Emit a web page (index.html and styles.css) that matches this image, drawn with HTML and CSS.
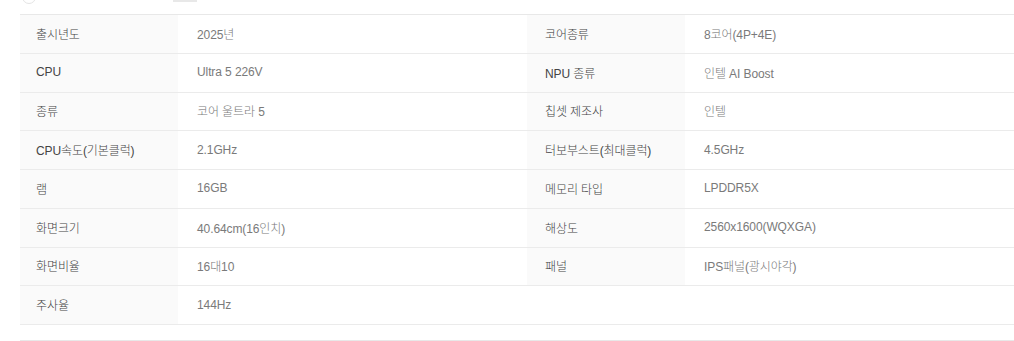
FILE: index.html
```html
<!DOCTYPE html>
<html lang="ko">
<head>
<meta charset="utf-8">
<link rel="stylesheet" href="styles.css">
</head>
<body>
<div class="page">
  <div class="top">
    <span class="dot"></span>
    <span class="tab"></span>
  </div>
  <table class="spec">
    <colgroup>
      <col class="c-label"><col class="c-value"><col class="c-label"><col class="c-value">
    </colgroup>
    <tbody>
      <tr><th>출시년도</th><td>2025년</td><th>코어종류</th><td>8코어(4P+4E)</td></tr>
      <tr><th>CPU</th><td>Ultra 5 226V</td><th>NPU 종류</th><td>인텔 AI Boost</td></tr>
      <tr><th>종류</th><td>코어 울트라 5</td><th>칩셋 제조사</th><td>인텔</td></tr>
      <tr><th>CPU속도(기본클럭)</th><td>2.1GHz</td><th>터보부스트(최대클럭)</th><td>4.5GHz</td></tr>
      <tr><th>램</th><td>16GB</td><th>메모리 타입</th><td>LPDDR5X</td></tr>
      <tr><th>화면크기</th><td>40.64cm(16인치)</td><th>해상도</th><td>2560x1600(WQXGA)</td></tr>
      <tr><th>화면비율</th><td>16대10</td><th>패널</th><td>IPS패널(광시야각)</td></tr>
      <tr><th>주사율</th><td>144Hz</td><td class="empty"></td><td class="empty"></td></tr>
    </tbody>
  </table>
  <div class="next"></div>
</div>
</body>
</html>
```
FILE: styles.css
```css
html, body {
  margin: 0;
  padding: 0;
  background: #fff;
  overflow: hidden;
}
body {
  font-family: "Liberation Sans", "Noto Sans CJK KR", sans-serif;
  font-size: 12px;
}
.page {
  width: 1034px;
  padding-left: 20px;
}
.top {
  height: 14px;
  position: relative;
}
.dot {
  position: absolute;
  left: 2px;
  top: -10px;
  width: 12px;
  height: 12px;
  border-radius: 50%;
  border: 1px solid #e4e4e4;
}
.tab {
  position: absolute;
  left: 153px;
  top: -12px;
  width: 24px;
  height: 14px;
  background: #e8e8e8;
}
.spec {
  width: 1014px;
  border-collapse: collapse;
  table-layout: fixed;
  border-top: 1px solid #e8e8e8;
}
.c-label { width: 158px; }
.c-value { width: 349px; }
.spec th, .spec td {
  height: 36.75px;
  padding: 0 0 1px 18px;
  border-bottom: 1px solid #ebebeb;
  text-align: left;
  vertical-align: middle;
  white-space: nowrap;
  font-weight: 300;
  letter-spacing: -0.1px;
}
.spec th {
  background: #fafafa;
  color: #444;
}
.spec tr th:first-child {
  padding-left: 16px;
}
.spec td {
  color: #7a7a7a;
  padding-left: 19px;
}
.spec td.empty {
  background: #fff;
}
.next {
  margin-top: 15px;
  width: 1014px;
  border-top: 1px solid #e8e8e8;
}
```
